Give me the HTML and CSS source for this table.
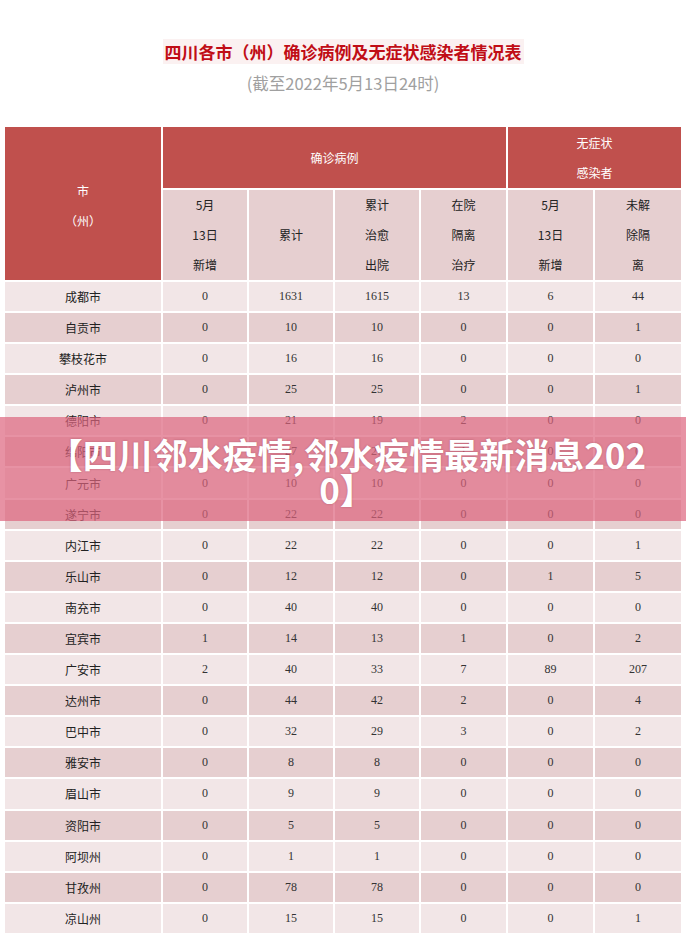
FILE: index.html
```html
<!DOCTYPE html>
<html lang="zh-CN">
<head>
<meta charset="utf-8">
<title>四川各市（州）确诊病例及无症状感染者情况表</title>
<link rel="stylesheet" href="styles.css">
</head>
<body>
<div class="page">
  <header class="head">
    <h1 class="title"><span>四川各市（州）确诊病例及无症状感染者情况表</span></h1>
    <p class="sub">(截至2022年5月13日24时)</p>
  </header>
  <table class="tbl">
    <colgroup>
      <col class="c-city"><col class="c-n"><col class="c-n"><col class="c-n"><col class="c-m"><col class="c-m"><col class="c-l">
    </colgroup>
    <thead>
      <tr class="h1">
        <th rowspan="2" class="red city-h">市<br>（州）</th>
        <th colspan="4" class="red">确诊病例</th>
        <th colspan="2" class="red">无症状<br>感染者</th>
      </tr>
      <tr class="h2">
        <th>5月<br>13日<br>新增</th>
        <th>累计</th>
        <th>累计<br>治愈<br>出院</th>
        <th>在院<br>隔离<br>治疗</th>
        <th>5月<br>13日<br>新增</th>
        <th>未解<br>除隔<br>离</th>
      </tr>
    </thead>
    <tbody>
      <tr><td class="city">成都市</td><td>0</td><td>1631</td><td>1615</td><td>13</td><td>6</td><td>44</td></tr>
      <tr><td class="city">自贡市</td><td>0</td><td>10</td><td>10</td><td>0</td><td>0</td><td>1</td></tr>
      <tr><td class="city">攀枝花市</td><td>0</td><td>16</td><td>16</td><td>0</td><td>0</td><td>0</td></tr>
      <tr><td class="city">泸州市</td><td>0</td><td>25</td><td>25</td><td>0</td><td>0</td><td>1</td></tr>
      <tr><td class="city">德阳市</td><td>0</td><td>21</td><td>19</td><td>2</td><td>0</td><td>0</td></tr>
      <tr><td class="city">绵阳市</td><td>0</td><td>27</td><td>26</td><td>1</td><td>0</td><td>0</td></tr>
      <tr><td class="city">广元市</td><td>0</td><td>10</td><td>10</td><td>0</td><td>0</td><td>0</td></tr>
      <tr><td class="city">遂宁市</td><td>0</td><td>22</td><td>22</td><td>0</td><td>0</td><td>0</td></tr>
      <tr><td class="city">内江市</td><td>0</td><td>22</td><td>22</td><td>0</td><td>0</td><td>1</td></tr>
      <tr><td class="city">乐山市</td><td>0</td><td>12</td><td>12</td><td>0</td><td>1</td><td>5</td></tr>
      <tr><td class="city">南充市</td><td>0</td><td>40</td><td>40</td><td>0</td><td>0</td><td>0</td></tr>
      <tr><td class="city">宜宾市</td><td>1</td><td>14</td><td>13</td><td>1</td><td>0</td><td>2</td></tr>
      <tr><td class="city">广安市</td><td>2</td><td>40</td><td>33</td><td>7</td><td>89</td><td>207</td></tr>
      <tr><td class="city">达州市</td><td>0</td><td>44</td><td>42</td><td>2</td><td>0</td><td>4</td></tr>
      <tr><td class="city">巴中市</td><td>0</td><td>32</td><td>29</td><td>3</td><td>0</td><td>2</td></tr>
      <tr><td class="city">雅安市</td><td>0</td><td>8</td><td>8</td><td>0</td><td>0</td><td>0</td></tr>
      <tr><td class="city">眉山市</td><td>0</td><td>9</td><td>9</td><td>0</td><td>0</td><td>0</td></tr>
      <tr><td class="city">资阳市</td><td>0</td><td>5</td><td>5</td><td>0</td><td>0</td><td>0</td></tr>
      <tr><td class="city">阿坝州</td><td>0</td><td>1</td><td>1</td><td>0</td><td>0</td><td>0</td></tr>
      <tr><td class="city">甘孜州</td><td>0</td><td>78</td><td>78</td><td>0</td><td>0</td><td>0</td></tr>
      <tr><td class="city">凉山州</td><td>0</td><td>15</td><td>15</td><td>0</td><td>0</td><td>1</td></tr>
    </tbody>
  </table>
  <div class="banner">
    <div class="banner-text">【四川邻水疫情,邻水疫情最新消息2020】</div>
  </div>
</div>
</body>
</html>
```
FILE: styles.css
```css
* { box-sizing: border-box; }
html, body { margin: 0; padding: 0; background: #ffffff; }
body { font-family: "Noto Sans CJK SC", "Noto Sans", sans-serif; overflow: hidden; }
.page { position: relative; width: 686px; height: 939px; overflow: hidden; }

.head { padding-top: 40px; text-align: center; }
.title { margin: 0; font-size: 17px; line-height: 24px; font-weight: 700; color: #c00d16; }
.title span { background: #fbf1f1; padding: 0 2px; }
.sub { margin: 7px 0 0; font-size: 16.5px; line-height: 24px; color: #a0a0a0; }

.tbl {
  margin: 30px 0 0 3px;
  border-collapse: separate;
  border-spacing: 2px;
  table-layout: fixed;
  width: 678px;
  font-size: 12px;
}
.c-city { width: 156px; }
.c-n { width: 84px; }
.c-m { width: 85px; }
.c-l { width: 86px; }

.tbl th { font-weight: 400; padding: 0; text-align: center; }
.tbl th.red { background: #c0504d; color: #ffffff; line-height: 30px; }
.h1 th { height: 61px; }
.h1 th.city-h { padding-top: 4px; }
.h2 th { height: 89px; background: #e6cfd0; color: #222; line-height: 30px; }

.tbl td {
  height: 29px;
  padding: 0;
  text-align: center;
  color: #333;
  font-family: "Liberation Serif", "Noto Sans CJK SC", serif;
  font-size: 12px;
}
.tbl tbody tr:nth-child(n+2) td { height: 29.1px; }
.tbl td.city { font-family: "Noto Sans CJK SC", sans-serif; font-size: 12px; color: #222; }
.tbl tbody tr:nth-child(odd) td { background: #f2e6e7; }
.tbl tbody tr:nth-child(even) td { background: #e6cfd0; }

.banner {
  position: absolute;
  left: 0;
  top: 417px;
  width: 686px;
  height: 104px;
  background: rgba(221, 100, 125, 0.7);
  padding: 19px 0 0;
}
.banner-text {
  width: 604px;
  margin-left: 45px;
  color: #ffffff;
  font-weight: 700;
  font-size: 35px;
  line-height: 35px;
  text-align: center;
  word-break: break-all;
  text-shadow: 0 0 2px rgba(90, 20, 40, 0.35);
}
```
